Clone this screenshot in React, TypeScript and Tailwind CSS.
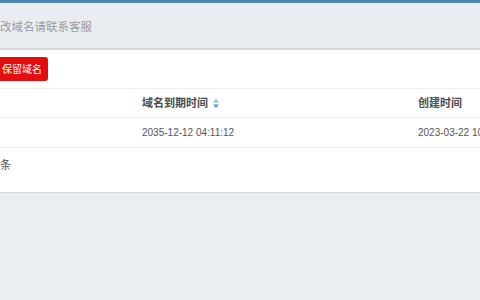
import React from "react";

function SortIcon() {
  return (
    <svg width="6" height="9" viewBox="0 0 6 9" className="ml-[5px]">
      <path d="M3 0 L6 3.5 L0 3.5 Z" fill="#8fb9cf" />
      <path d="M3 9 L6 5.5 L0 5.5 Z" fill="#4d9bc4" />
    </svg>
  );
}

export default function App() {
  return (
    <div
      className="w-[480px] h-[300px] overflow-hidden bg-[#eaedf2] flex flex-col"
      style={{ fontFamily: '"Liberation Sans", "Noto Sans CJK SC", sans-serif' }}
    >
      <div className="h-[3px] bg-[#4b87b2] shrink-0" />
      <div className="h-[47px] pt-[4px] shrink-0 bg-[#e9edf2] flex items-center border-b-2 border-[#d5d8dc]">
        <span className="text-[11.5px] text-[#9a9a9a] whitespace-nowrap">改域名请联系客服</span>
      </div>
      <div className="bg-white flex flex-col shrink-0 shadow-[0_1px_1px_rgba(0,0,0,0.08)]">
        <div className="pt-[7px] pb-[7px] flex">
          <button className="ml-[-4px] h-[24px] pl-[6px] pr-[6px] rounded-[3px] bg-[#e30d0d] text-white text-[10px] whitespace-nowrap flex items-center">
            保留域名
          </button>
        </div>
        <div className="border-t border-[#eef0f2]">
          <div className="flex h-[29px] items-center text-[11px] font-bold text-[#4a4a4a] border-b border-[#eef0f2]">
            <div className="w-[142px] shrink-0" />
            <div className="w-[276px] shrink-0 flex items-center whitespace-nowrap">
              域名到期时间
              <SortIcon />
            </div>
            <div className="shrink-0 whitespace-nowrap">创建时间</div>
          </div>
          <div className="flex h-[30px] items-center text-[10px] text-[#555] border-b border-[#eef0f2]">
            <div className="w-[142px] shrink-0" />
            <div className="w-[276px] shrink-0 whitespace-nowrap">2035-12-12 04:11:12</div>
            <div className="shrink-0 whitespace-nowrap">2023-03-22 10</div>
          </div>
        </div>
        <div className="h-[44px] pt-[9px] flex">
          <span className="text-[11px] text-[#555] whitespace-nowrap leading-[16px]">条</span>
        </div>
      </div>
    </div>
  );
}
